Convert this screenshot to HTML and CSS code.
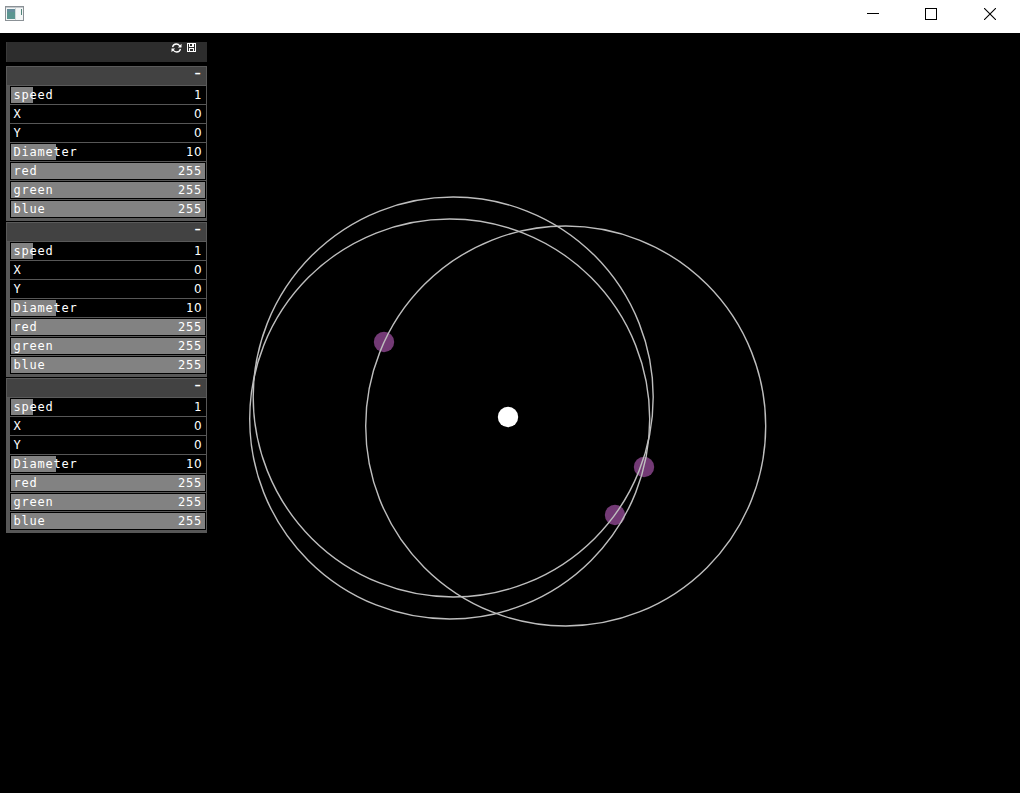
FILE: index.html
```html
<!DOCTYPE html>
<html lang="en">
<head>
<meta charset="utf-8">
<title>Orbits</title>
<link rel="stylesheet" href="styles.css">
</head>
<body>
<header class="titlebar">
  <svg class="app-icon" width="20" height="16" viewBox="0 0 20 16" shape-rendering="crispEdges">
    <rect x="0.5" y="0.5" width="18" height="14" fill="#f4f6f6" stroke="#8b9196"/>
    <rect x="1" y="1" width="17" height="1" fill="#c3c9cd"/>
    <rect x="2" y="3" width="8" height="10" fill="#5b9590"/>
    <rect x="2" y="3" width="8" height="3" fill="#648c9a"/>
    <rect x="10" y="2" width="1" height="12" fill="#d0d8d8"/>
    <rect x="16" y="3" width="1" height="6" fill="#50847a"/>
  </svg>
  <div class="window-buttons">
    <svg width="12" height="12" viewBox="0 0 12 12"><path d="M0 5.5H12" stroke="#000"/></svg>
    <svg width="12" height="12" viewBox="0 0 12 12"><rect x=".5" y=".5" width="11" height="11" fill="none" stroke="#000"/></svg>
    <svg width="12" height="12" viewBox="0 0 12 12"><path d="M0 0L12 12M12 0L0 12" stroke="#000" stroke-width="1.1"/></svg>
  </div>
</header>
<main class="stage">
  <section class="panel">
    <div class="panel-head">
      <svg width="11" height="10" viewBox="0 0 11 10" fill="none" stroke="#fff" stroke-width="1.3">
        <path d="M1.6 4.2C2 2 3.7 1 5.3 1C6.8 1 8 1.7 8.9 3M9.4 5.8C9 8 7.3 9 5.7 9C4.2 9 3 8.3 2.1 7"/>
        <path d="M10.5 .8V4.4H6.9ZM.5 9.2V5.6H4.1Z" fill="#fff" stroke="none"/>
      </svg>
      <svg width="10" height="9" viewBox="0 0 10 9" shape-rendering="crispEdges">
        <path fill="#fff" fill-rule="evenodd" d="M0 0H9V9H0ZM1 1V8H2V5H7V8H8V1H7V4H2V1ZM3 6V8H6V6ZM3 1V3H5V1Z"/>
      </svg>
    </div>
    <div class="group">
      <div class="group-head">-</div>
      <div class="row"><i class="fill speed"></i><span>speed</span><span>1</span></div>
      <div class="row"><span>X</span><span class="zero">0</span></div>
      <div class="row"><span>Y</span><span class="zero">0</span></div>
      <div class="row"><i class="fill diameter"></i><span>Diameter</span><span>1<b class="zero">0</b></span></div>
      <div class="row"><i class="fill full"></i><span>red</span><span>255</span></div>
      <div class="row"><i class="fill full"></i><span>green</span><span>255</span></div>
      <div class="row"><i class="fill full"></i><span>blue</span><span>255</span></div>
    </div>
    <div class="group">
      <div class="group-head">-</div>
      <div class="row"><i class="fill speed"></i><span>speed</span><span>1</span></div>
      <div class="row"><span>X</span><span class="zero">0</span></div>
      <div class="row"><span>Y</span><span class="zero">0</span></div>
      <div class="row"><i class="fill diameter"></i><span>Diameter</span><span>1<b class="zero">0</b></span></div>
      <div class="row"><i class="fill full"></i><span>red</span><span>255</span></div>
      <div class="row"><i class="fill full"></i><span>green</span><span>255</span></div>
      <div class="row"><i class="fill full"></i><span>blue</span><span>255</span></div>
    </div>
    <div class="group">
      <div class="group-head">-</div>
      <div class="row"><i class="fill speed"></i><span>speed</span><span>1</span></div>
      <div class="row"><span>X</span><span class="zero">0</span></div>
      <div class="row"><span>Y</span><span class="zero">0</span></div>
      <div class="row"><i class="fill diameter"></i><span>Diameter</span><span>1<b class="zero">0</b></span></div>
      <div class="row"><i class="fill full"></i><span>red</span><span>255</span></div>
      <div class="row"><i class="fill full"></i><span>green</span><span>255</span></div>
      <div class="row"><i class="fill full"></i><span>blue</span><span>255</span></div>
    </div>
  </section>
  <svg class="orbits" width="1020" height="760" viewBox="0 33 1020 760">
    <g fill="#733a75">
      <circle cx="384" cy="342" r="10.2"/>
      <circle cx="644" cy="467" r="10.2"/>
      <circle cx="615" cy="515" r="10.2"/>
    </g>
    <circle cx="508" cy="417" r="10.2" fill="#fff"/>
    <g fill="none" stroke="#bebebe" stroke-width="1.4">
      <circle cx="453.2" cy="397" r="200"/>
      <circle cx="449.7" cy="419" r="200"/>
      <circle cx="565.7" cy="426" r="200"/>
    </g>
  </svg>
</main>
</body>
</html>
```
FILE: styles.css
```css
* { box-sizing: border-box; }
body {
  margin: 0;
  width: 1020px;
  height: 793px;
  overflow: hidden;
  background: #000;
}
svg { display: block; }
.titlebar {
  height: 33px;
  padding: 6px 24px 0 5px;
  display: flex;
  justify-content: space-between;
  background: #fff;
}
.window-buttons {
  display: flex;
  gap: 46px;
  padding-top: 2px;
}
.window-buttons svg:last-child { margin-left: 1px; }
.stage {
  position: relative;
  height: 760px;
  padding: 9px 0 0 6px;
}
.orbits {
  position: absolute;
  inset: 0;
  pointer-events: none;
}
.panel {
  width: 201px;
  color: #fff;
  font: 12px/18px "DejaVu Sans Mono", monospace;
  letter-spacing: 0.776px;
}
.panel-head {
  height: 20px;
  margin-bottom: 4px;
  padding: 1px 10px 0 0;
  display: flex;
  justify-content: flex-end;
  gap: 5px;
  background: #2d2d2d;
  border-left: 1px solid #3a3a3a;
}
.group {
  margin-bottom: 1px;
  padding-bottom: 2px;
  background: #575757;
}
.group-head {
  height: 20px;
  padding-right: 3px;
  line-height: 15px;
  font-family: "Liberation Mono", monospace;
  font-size: 18px;
  letter-spacing: 0;
  text-align: right;
  background: #424242;
  border: 1px solid #5a5a5a;
}
.row {
  position: relative;
  display: flex;
  justify-content: space-between;
  height: 18px;
  margin: 0 1px 1px 4px;
  padding: 0 4px 0 3.6px;
  background: #000;
}
.row span { position: relative; }
.fill {
  position: absolute;
  left: 1px;
  top: 1px;
  height: 16px;
  background: #828282;
}
.speed { width: 22px; }
.diameter { width: 45px; }
.full { width: 194px; }
.zero {
  font-family: "DejaVu Sans", sans-serif;
  font-weight: normal;
  letter-spacing: 0.37px;
}
```
